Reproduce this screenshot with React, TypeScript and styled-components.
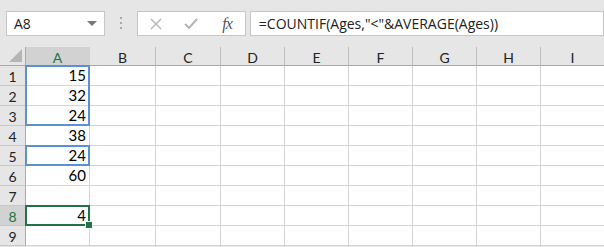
import React from 'react';
import styled, { createGlobalStyle } from 'styled-components';

const GlobalStyle = createGlobalStyle`
  html, body { margin: 0; padding: 0; background: #ffffff; }
  body { width: 604px; height: 247px; overflow: hidden; }
`;

const columns = ['A', 'B', 'C', 'D', 'E', 'F', 'G', 'H', 'I'];
const colWidths = [64, 66, 65, 64, 64, 64, 64, 64, 64];
const values: Record<number, string> = { 1: '15', 2: '32', 3: '24', 4: '38', 5: '24', 6: '60', 8: '4' };
const rows = [1, 2, 3, 4, 5, 6, 7, 8, 9];

const Page = styled.div`
  width: 604px;
  height: 247px;
  overflow: hidden;
  background: #e6e6e6;
  font-family: "Open Sans", "Noto Sans", sans-serif;
`;

const Toolbar = styled.div`
  display: flex;
  align-items: flex-start;
  height: 47px;
  padding: 11px 0 0 6px;
  box-sizing: border-box;
`;

const Box = styled.div<{ $width: number; $gap?: number }>`
  display: flex;
  align-items: center;
  width: ${p => p.$width}px;
  height: 25px;
  margin-left: ${p => p.$gap ?? 0}px;
  background: #ffffff;
  border: 1px solid #c6c6c6;
  box-sizing: border-box;
`;

const NameText = styled.span`
  flex: 1;
  padding-left: 7px;
  font-size: 14px;
  color: #222;
`;

const DropArrow = styled.span`
  width: 0;
  height: 0;
  margin-right: 7px;
  border-left: 5px solid transparent;
  border-right: 5px solid transparent;
  border-top: 5px solid #777;
`;

const Grip = styled.div`
  display: flex;
  flex-direction: column;
  gap: 3px;
  width: 32px;
  align-items: center;
  padding-top: 6px;
`;

const GripDot = styled.span`
  width: 2px;
  height: 2px;
  background: #a8a8a8;
`;

const IconSlot = styled.span<{ $color: string }>`
  display: flex;
  align-items: center;
  justify-content: center;
  width: 36px;
  height: 100%;
  color: ${p => p.$color};
`;

const Fx = styled.span`
  font-family: "Liberation Serif", serif;
  font-style: italic;
  font-size: 16px;
  color: #555;
  letter-spacing: -1px;
`;

const FormulaText = styled.span`
  padding-left: 8px;
  font-size: 14px;
  color: #222;
  white-space: nowrap;
`;

const Sheet = styled.div`
  display: grid;
  grid-template-columns: 26px ${colWidths.map(w => `${w}px`).join(' ')};
  grid-template-rows: 19px repeat(9, 20px);
  background: #ffffff;
  font-family: "Lato", "Liberation Sans", sans-serif;
`;

const Corner = styled.div`
  position: relative;
  grid-row: 1;
  grid-column: 1;
  background: #e6e6e6;
  border-right: 1px solid #ababab;
  border-bottom: 1px solid #ababab;
  box-sizing: border-box;
  &::after {
    content: '';
    position: absolute;
    right: 3px;
    bottom: 3px;
    border-left: 13px solid transparent;
    border-bottom: 13px solid #b5b5b5;
  }
`;

const ColHead = styled.div<{ $col: number; $active?: boolean }>`
  grid-row: 1;
  grid-column: ${p => p.$col};
  display: flex;
  align-items: center;
  justify-content: center;
  background: ${p => (p.$active ? '#d2d2d2' : '#e6e6e6')};
  border-bottom: 1px solid #ababab;
  border-right: 1px solid ${p => (p.$active ? '#d2d2d2' : '#bdbdbd')};
  box-sizing: border-box;
  font-size: 14px;
  padding-top: 3px;
  color: ${p => (p.$active ? '#217346' : '#222')};
`;

const RowHead = styled.div<{ $row: number; $active?: boolean }>`
  grid-row: ${p => p.$row};
  grid-column: 1;
  display: flex;
  align-items: center;
  justify-content: center;
  background: ${p => (p.$active ? '#d2d2d2' : '#e6e6e6')};
  border-right: 1px solid #ababab;
  border-bottom: 1px solid #c8c8c8;
  box-sizing: border-box;
  font-size: 14px;
  padding-top: 1px;
  color: ${p => (p.$active ? '#217346' : '#222')};
`;

const Cell = styled.div<{ $row: number; $col: number }>`
  grid-row: ${p => p.$row};
  grid-column: ${p => p.$col};
  display: flex;
  align-items: flex-end;
  justify-content: flex-end;
  padding: 0 3px 1px 0;
  border-right: 1px solid #d4d4d4;
  border-bottom: 1px solid #d4d4d4;
  box-sizing: border-box;
  font-size: 15px;
  color: #000;
`;

const RangeBox = styled.div<{ $rows: string; $color: string }>`
  grid-column: 2;
  grid-row: ${p => p.$rows};
  margin: -1px 0 0 -1px;
  border: 2px solid ${p => p.$color};
  z-index: 1;
  pointer-events: none;
`;

const ActiveBox = styled(RangeBox)`
  position: relative;
  &::after {
    content: '';
    position: absolute;
    right: -5px;
    bottom: -5px;
    width: 6px;
    height: 6px;
    background: #217346;
    border: 1px solid #ffffff;
  }
`;

export default function App() {
  return (
    <Page>
      <GlobalStyle />
      <Toolbar>
        <Box $width={101}>
          <NameText>A8</NameText>
          <DropArrow />
        </Box>
        <Grip>
          <GripDot />
          <GripDot />
          <GripDot />
        </Grip>
        <Box $width={109}>
          <IconSlot $color="#b5b5b5">
            <svg width="12" height="12" viewBox="0 0 12 12">
              <path d="M1 1 L11 11 M11 1 L1 11" stroke="currentColor" strokeWidth="1.4" />
            </svg>
          </IconSlot>
          <IconSlot $color="#b5b5b5">
            <svg width="14" height="11" viewBox="0 0 14 11">
              <path d="M1 6 L5 10 L13 1" stroke="currentColor" strokeWidth="2" fill="none" />
            </svg>
          </IconSlot>
          <IconSlot $color="#555">
            <Fx>fx</Fx>
          </IconSlot>
        </Box>
        <Box $width={360} $gap={4}>
          <FormulaText>=COUNTIF(Ages,"&lt;"&amp;AVERAGE(Ages))</FormulaText>
        </Box>
      </Toolbar>
      <Sheet>
        <Corner />
        {columns.map((c, i) => (
          <ColHead key={c} $col={i + 2} $active={c === 'A'}>{c}</ColHead>
        ))}
        {rows.map(r => (
          <React.Fragment key={r}>
            <RowHead $row={r + 1} $active={r === 8}>{r}</RowHead>
            {columns.map((c, i) => (
              <Cell key={c} $row={r + 1} $col={i + 2}>{c === 'A' ? values[r] ?? '' : ''}</Cell>
            ))}
          </React.Fragment>
        ))}
        <RangeBox $rows="2 / 5" $color="#5b8fd6" />
        <RangeBox $rows="6 / 7" $color="#5b8fd6" />
        <ActiveBox $rows="9 / 10" $color="#217346" />
      </Sheet>
    </Page>
  );
}
